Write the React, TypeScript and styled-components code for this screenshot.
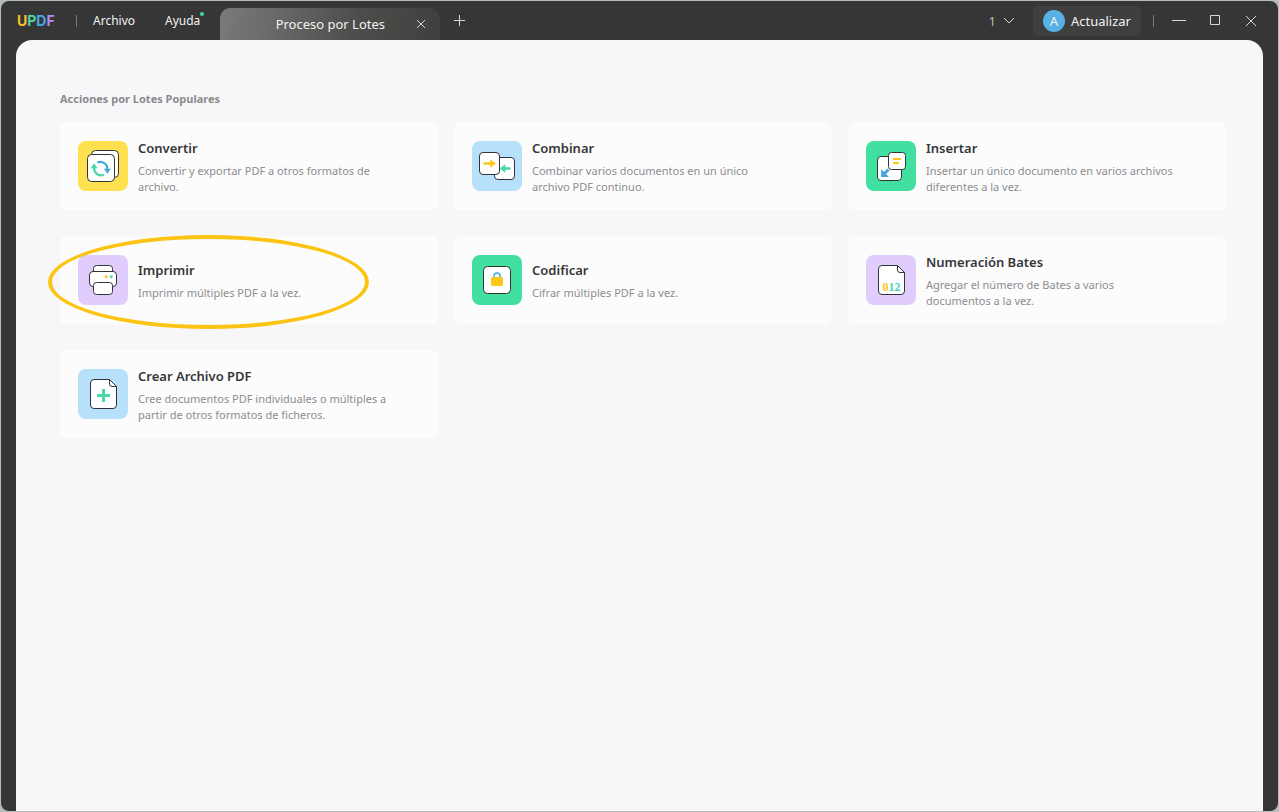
import React from "react";
import styled, { createGlobalStyle } from "styled-components";

const GlobalStyle = createGlobalStyle`
  * { box-sizing: border-box; }
  body {
    margin: 0;
    background: #b3beb9;
    font-family: "Noto Sans", "Open Sans", sans-serif;
  }
  button { font: inherit; color: inherit; border: 0; padding: 0; background: none; cursor: pointer; }
  h1, h2, p { margin: 0; }
`;

const Frame = styled.div`
  min-height: 100vh;
  padding: 1px;
  display: flex;
`;

const Window = styled.div`
  flex: 1;
  display: flex;
  flex-direction: column;
  background: #363636;
  border-radius: 8px;
  overflow: hidden;
`;

const TitleBar = styled.header`
  height: 39px;
  display: flex;
  align-items: center;
  color: #f2f2f2;
  font-size: 13px;
  line-height: 20px;
  padding: 0 21px 0 16px;
`;

const Logo = styled.div`
  width: 59px;
  font-family: Inter, sans-serif;
  font-size: 14px;
  font-weight: 700;
`;

const Letter = styled.span<{ $tone: string }>`
  color: ${(p) => p.$tone};
`;

const Divider = styled.span`
  width: 1px;
  height: 12px;
  background: #777;
`;

const MenuButton = styled.button<{ $gap: number }>`
  position: relative;
  margin-left: ${(p) => p.$gap}px;
  font-size: 12px;
  line-height: 20px;
`;

const NewDot = styled.span`
  position: absolute;
  top: 1px;
  right: -4px;
  width: 4px;
  height: 4px;
  border-radius: 50%;
  background: #3edc9b;
`;

const Tab = styled.div`
  align-self: flex-end;
  width: 220px;
  height: 32px;
  margin-left: 20px;
  padding: 0 14px 0 0;
  display: flex;
  align-items: center;
  border-radius: 10px 10px 0 0;
  background: linear-gradient(100deg, #7a7a7a 0%, #696968 25%, #4d4d4b 62%, #3f3f3e 100%);
`;

const TabTitle = styled.button`
  flex: 1;
  padding-left: 24px;
  white-space: nowrap;
`;

const IconButton = styled.button<{ $gap: number }>`
  display: flex;
  margin-left: ${(p) => p.$gap}px;
`;

const Spacer = styled.div`
  flex: 1;
`;

const Counter = styled.button`
  display: flex;
  align-items: center;
  gap: 7px;
  margin-right: 18px;
  color: #b8b8b8;
`;

const Account = styled.button`
  display: flex;
  align-items: center;
  gap: 6px;
  height: 30px;
  margin-right: 12px;
  padding: 0 10px;
  border-radius: 5px;
  background: #3f3f40;
`;

const Avatar = styled.span`
  width: 22px;
  height: 22px;
  border-radius: 50%;
  background: #57b1e4;
  line-height: 22px;
  text-align: center;
`;

const Content = styled.main`
  flex: 1;
  margin: 0 15px;
  padding: 49px 37px 44px 44px;
  border-radius: 16px 16px 0 0;
  background: #f7f7f9;
`;

const Heading = styled.h1`
  color: #8b8b8d;
  font-size: 11px;
  line-height: 20px;
  font-weight: 700;
`;

const Grid = styled.div`
  display: grid;
  grid-template-columns: repeat(3, 1fr);
  gap: 26px 16px;
  margin-top: 13px;
`;

const Cell = styled.div`
  position: relative;
  display: flex;
`;

const Card = styled.button`
  flex: 1;
  display: flex;
  align-items: center;
  gap: 10px;
  min-height: 88px;
  padding: 0 18px;
  border-radius: 6px;
  background: #fcfcfd;
  text-align: left;
`;

const Tile = styled.span<{ $color: string }>`
  flex: none;
  width: 50px;
  height: 50px;
  border-radius: 8px;
  background: ${(p) => p.$color};
`;

const CardText = styled.span`
  display: flex;
  flex-direction: column;
  gap: 4px;
  max-width: 252px;
`;

const CardTitle = styled.span`
  color: #363638;
  font-size: 13px;
  line-height: 22px;
  font-weight: 600;
`;

const CardDetail = styled.span`
  color: #8d8d90;
  font-size: 11px;
  line-height: 16px;
`;

const Highlight = styled.span`
  position: absolute;
  top: -1px;
  left: -12px;
  width: 321px;
  height: 94px;
  border: 4px solid #fbc412;
  border-radius: 50%;
  pointer-events: none;
`;

const INK = "#343438";

const Art = ({ children }: { children: React.ReactNode }) => (
  <svg width="50" height="50" viewBox="0 0 50 50" fill="none" aria-hidden="true">
    {children}
  </svg>
);

const ConvertIcon = () => (
  <Art>
    <rect x="13.5" y="9.5" width="27" height="27" rx="4" fill="#fff" stroke={INK} />
    <rect x="9.5" y="13.5" width="27" height="27" rx="4" fill="#fff" stroke={INK} />
    <path d="M19.3 21.6a7 7 0 0 1 10 6.9" stroke="#45a8de" strokeWidth="2.2" />
    <path d="M25.8 27.8h7l-3.4 5z" fill="#45a8de" />
    <path d="M26 33.8a7 7 0 0 1-9.8-7" stroke="#4ad8a4" strokeWidth="2.2" />
    <path d="M12.6 27.2h7l-3.4-5z" fill="#4ad8a4" />
  </Art>
);

const CombineIcon = () => (
  <Art>
    <rect x="22.5" y="16.5" width="20" height="22" rx="3.5" fill="#fff" stroke={INK} />
    <rect x="7.5" y="11.5" width="20" height="22" rx="3.5" fill="#fff" stroke={INK} />
    <path d="M11.5 22.5h8" stroke="#ffc61a" strokeWidth="2.6" />
    <path d="M18.5 18.8l5 3.7-5 3.7z" fill="#ffc61a" stroke="#ffc61a" strokeWidth=".6" strokeLinejoin="round" />
    <path d="M31 27.5h7.5" stroke="#48daa4" strokeWidth="2.6" />
    <path d="M33 23.8l-5 3.7 5 3.7z" fill="#48daa4" stroke="#48daa4" strokeWidth=".6" strokeLinejoin="round" />
  </Art>
);

const InsertIcon = () => (
  <Art>
    <rect x="11.5" y="15.5" width="24" height="24" rx="3.5" fill="#fff" stroke={INK} />
    <rect x="22.5" y="11.5" width="17" height="17" rx="3" fill="#fff" stroke={INK} />
    <path d="M27 18h8M27 22h6" stroke="#ffc61a" strokeWidth="2" />
    <path d="M22.5 28.5l-5 5" stroke="#45a3e0" strokeWidth="3" />
    <path d="M15.2 28v8H23z" fill="#45a3e0" />
  </Art>
);

const PrintIcon = () => (
  <Art>
    <path d="M15.5 17v-3.5a3 3 0 0 1 3-3h13a3 3 0 0 1 3 3V17" fill="#fff" stroke={INK} />
    <rect x="11.5" y="16.5" width="27" height="15" rx="3.5" fill="#fff" stroke={INK} />
    <rect x="15.5" y="27.5" width="19" height="12" rx="3" fill="#fff" stroke={INK} />
    <circle cx="28.3" cy="21.7" r="1.5" fill="#ffc61a" />
    <circle cx="33.3" cy="21.7" r="1.5" fill="#48daa4" />
  </Art>
);

const LockIcon = () => (
  <Art>
    <rect x="11.5" y="11.5" width="27" height="27" rx="4" fill="#fff" stroke={INK} />
    <path d="M22 23v-2a3 3 0 0 1 6 0v2" stroke="#45a8de" strokeWidth="1.5" />
    <rect x="19" y="22" width="12" height="9" rx="1.8" fill="#ffc61a" />
  </Art>
);

const Sheet = () => (
  <>
    <path d="M16 10.5h15.5l7 7v18.5a3.5 3.5 0 0 1-3.5 3.5H16a3.5 3.5 0 0 1-3.5-3.5V14a3.5 3.5 0 0 1 3.5-3.5z" fill="#fff" stroke={INK} />
    <path d="M31.5 10.5v4.5a2.5 2.5 0 0 0 2.5 2.5h4.5" stroke={INK} />
  </>
);

const BatesIcon = () => (
  <Art>
    <Sheet />
    <text x="25.5" y="36" textAnchor="middle" fontFamily="'Liberation Serif', serif" fontWeight="700" fontSize="12">
      <tspan fill="#ffc61a">0</tspan>
      <tspan fill="#48daa4">1</tspan>
      <tspan fill="#48cfc0">2</tspan>
    </text>
  </Art>
);

const CreateIcon = () => (
  <Art>
    <Sheet />
    <path d="M25.5 20v13M19 26.5h13" stroke="#48daa4" strokeWidth="3" />
  </Art>
);

const actions = [
  { title: "Convertir", detail: "Convertir y exportar PDF a otros formatos de archivo.", color: "#ffe150", Icon: ConvertIcon },
  { title: "Combinar", detail: "Combinar varios documentos en un único archivo PDF continuo.", color: "#b7e0fa", Icon: CombineIcon },
  { title: "Insertar", detail: "Insertar un único documento en varios archivos diferentes a la vez.", color: "#41dfa0", Icon: InsertIcon },
  { title: "Imprimir", detail: "Imprimir múltiples PDF a la vez.", color: "#e0cdfe", Icon: PrintIcon, highlighted: true },
  { title: "Codificar", detail: "Cifrar múltiples PDF a la vez.", color: "#41dfa0", Icon: LockIcon },
  { title: "Numeración Bates", detail: "Agregar el número de Bates a varios documentos a la vez.", color: "#e0cdfe", Icon: BatesIcon },
  { title: "Crear Archivo PDF", detail: "Cree documentos PDF individuales o múltiples a partir de otros formatos de ficheros.", color: "#b7e0fa", Icon: CreateIcon },
];

const Glyph = ({ w, h, d }: { w: number; h: number; d: string }) => (
  <svg width={w} height={h} viewBox={`0 0 ${w} ${h}`} fill="none" stroke="#d8d8d8" aria-hidden="true">
    <path d={d} />
  </svg>
);

export default function App() {
  return (
    <Frame>
      <GlobalStyle />
      <Window>
        <TitleBar>
          <Logo>
            <Letter $tone="#fbc02a">U</Letter>
            <Letter $tone="#4ad8a0">P</Letter>
            <Letter $tone="#48a6e4">D</Letter>
            <Letter $tone="#b58af0">F</Letter>
          </Logo>
          <Divider />
          <MenuButton $gap={16}>Archivo</MenuButton>
          <MenuButton $gap={30}>
            Ayuda
            <NewDot />
          </MenuButton>
          <Tab>
            <TabTitle>Proceso por Lotes</TabTitle>
            <IconButton $gap={0} aria-label="Cerrar pestaña">
              <Glyph w={10} h={10} d="M1 1l8 8M9 1l-8 8" />
            </IconButton>
          </Tab>
          <IconButton $gap={14} aria-label="Nueva pestaña">
            <Glyph w={12} h={12} d="M5.5 0v11M0 5.5h11" />
          </IconButton>
          <Spacer />
          <Counter>
            1
            <Glyph w={12} h={8} d="M1 1l5 5 5-5" />
          </Counter>
          <Account>
            <Avatar>A</Avatar>
            Actualizar
          </Account>
          <Divider />
          <IconButton $gap={18} aria-label="Minimizar">
            <Glyph w={14} h={11} d="M0 5.5h14" />
          </IconButton>
          <IconButton $gap={24} aria-label="Maximizar">
            <Glyph w={11} h={11} d="M.5 .5h9v9h-9z" />
          </IconButton>
          <IconButton $gap={24} aria-label="Cerrar">
            <Glyph w={12} h={12} d="M1 1l10 10M11 1l-10 10" />
          </IconButton>
        </TitleBar>
        <Content>
          <Heading>Acciones por Lotes Populares</Heading>
          <Grid>
            {actions.map(({ title, detail, color, Icon, highlighted }) => (
              <Cell key={title}>
                <Card>
                  <Tile $color={color}>
                    <Icon />
                  </Tile>
                  <CardText>
                    <CardTitle>{title}</CardTitle>
                    <CardDetail>{detail}</CardDetail>
                  </CardText>
                </Card>
                {highlighted && <Highlight />}
              </Cell>
            ))}
          </Grid>
        </Content>
      </Window>
    </Frame>
  );
}
